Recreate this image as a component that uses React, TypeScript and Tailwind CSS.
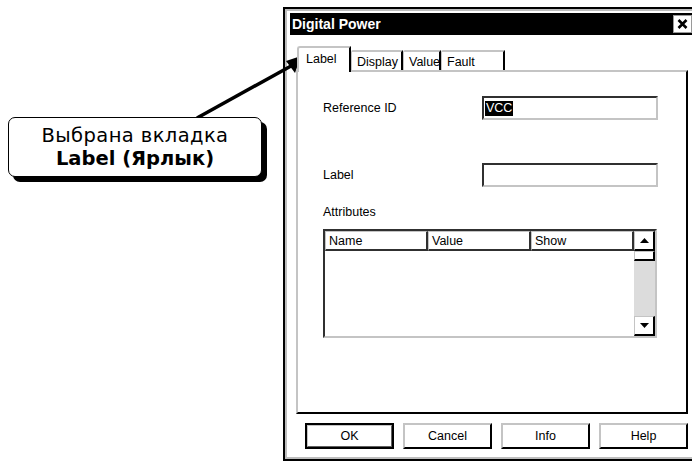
const Tri = ({ up }: { up: boolean }) => (
    <svg width="9" height="5" viewBox="0 0 9 5">
        {up ? <polygon points="0,5 9,5 4.5,0" fill="#000" /> : <polygon points="0,0 9,0 4.5,5" fill="#000" />}
    </svg>
)

const tabs = [
    { name: "Display", w: "w-[52px]" },
    { name: "Value", w: "w-[38px]" },
    { name: "Fault", w: "w-[64px]" },
]

const App = () => {
    return (
        <div className="relative w-[692px] h-[462px] overflow-hidden bg-white pt-[7px] font-['Liberation_Sans',Arial,sans-serif] text-black">
            {/* dialog window */}
            <div className="ml-[283px] w-[418px] h-[454px] border-2 border-black">
                <div className="h-full border-2 border-[#bdbdbd] pt-[2px] px-[3px] flex flex-col">
                    <div className="h-[22px] bg-black flex items-center justify-between pl-[2px]">
                        <span className="text-white font-bold text-[14px] leading-none">Digital Power</span>
                        <div className="w-[19px] h-[18px] mr-[2px] bg-white border border-[#9a9a9a] flex items-center justify-center">
                            <svg width="11" height="10" viewBox="0 0 11 10">
                                <path d="M1.5 1 L9.5 9 M9.5 1 L1.5 9" stroke="#000" strokeWidth="2.6" />
                            </svg>
                        </div>
                    </div>

                    {/* tabs */}
                    <div className="mt-[11px] ml-[6px] flex items-end text-[12.5px] leading-none">
                        <div className="relative z-10 -mb-[2px] ml-[1px] w-[54px] h-[26px] bg-white border-l-2 border-t-2 border-r-2 border-l-[#c4c4c4] border-t-[#c4c4c4] border-r-black rounded-tl-[3px] pl-[7px] pt-[5px]">
                            Label
                        </div>
                        {tabs.map((t) => (
                            <div key={t.name} className={`${t.w} h-[20px] bg-white border-l border-t-2 border-r-2 border-l-[#c4c4c4] border-t-[#c4c4c4] border-r-black rounded-tl-[2px] pl-[5px] pt-[4px]`}>
                                {t.name}
                            </div>
                        ))}
                    </div>

                    {/* panel */}
                    <div className="mx-[6px] h-[344px] border-2 border-t-[#c4c4c4] border-l-[#c4c4c4] border-r-black border-b-black text-[12.5px] pl-[25px] pt-[24px]">
                        <div className="flex items-center h-[24px]">
                            <span className="w-[159px]">Reference ID</span>
                            <div className="w-[176px] h-[24px] border-2 border-t-[#303030] border-l-[#303030] border-r-[#c4c4c4] border-b-[#c4c4c4] flex items-center pl-[1px]">
                                <span className="bg-black text-white leading-[15px] px-[1px]">VCC</span>
                            </div>
                        </div>
                        <div className="flex items-center h-[24px] mt-[43px]">
                            <span className="w-[159px]">Label</span>
                            <div className="w-[176px] h-[24px] border-2 border-t-[#303030] border-l-[#303030] border-r-[#c4c4c4] border-b-[#c4c4c4]" />
                        </div>
                        <div className="mt-[18px] leading-[15px]">Attributes</div>

                        {/* attributes list */}
                        <div className="mt-[9px] w-[334px] h-[109px] border-2 border-t-[#303030] border-l-[#303030] border-r-[#c4c4c4] border-b-[#c4c4c4] flex">
                            <div className="flex-1">
                                <div className="flex h-[20px]">
                                    {["Name", "Value", "Show"].map((h) => (
                                        <div key={h} className="w-[103px] h-[20px] border-l border-t border-l-[#c4c4c4] border-t-[#c4c4c4] border-r-2 border-b-2 border-r-[#303030] border-b-[#303030] pl-[3px] leading-[18px]">
                                            {h}
                                        </div>
                                    ))}
                                </div>
                            </div>
                            <div className="w-[21px] flex flex-col">
                                <div className="h-[20px] border-l border-t border-l-[#c4c4c4] border-t-[#c4c4c4] border-r-2 border-b-2 border-r-black border-b-black flex items-center justify-center">
                                    <Tri up />
                                </div>
                                <div className="h-[10px] border-l border-t border-l-[#c4c4c4] border-t-[#c4c4c4] border-r-2 border-b-2 border-r-black border-b-black bg-white" />
                                <div className="flex-1 bg-[#dcdcdc]" />
                                <div className="h-[20px] border-l border-t border-l-[#c4c4c4] border-t-[#c4c4c4] border-r-2 border-b-2 border-r-black border-b-black flex items-center justify-center">
                                    <Tri up={false} />
                                </div>
                            </div>
                        </div>
                    </div>

                    {/* buttons */}
                    <div className="mt-[9px] ml-[15px] flex gap-[9px] text-[12.5px]">
                        <div className="w-[89px] h-[26px] border-2 border-black flex">
                            <div className="flex-1 border-r border-b border-r-[#606060] border-b-[#606060] border-l border-t border-l-[#c4c4c4] border-t-[#c4c4c4] flex items-center justify-center">OK</div>
                        </div>
                        {["Cancel", "Info", "Help"].map((b) => (
                            <div key={b} className="w-[89px] h-[26px] border-2 border-l-[#c4c4c4] border-t-[#c4c4c4] border-r-black border-b-black flex items-center justify-center">
                                {b}
                            </div>
                        ))}
                    </div>
                </div>
            </div>

            {/* callout arrow */}
            <svg className="absolute left-0 top-0 pointer-events-none" width="692" height="462" viewBox="0 0 692 462">
                <line x1="197" y1="118" x2="291" y2="66" stroke="#000" strokeWidth="3.5" />
                <polygon points="301,56 286,61 295,73" fill="#000" />
            </svg>

            {/* callout box */}
            <div className="absolute left-[8px] top-[117px] w-[254px] h-[60px] rounded-[7px] border-[1.5px] border-black bg-white shadow-[5px_5px_0_0_#000] flex flex-col items-center justify-center text-[19.5px] leading-[23px] font-['DejaVu_Sans',sans-serif]">
                <span className="tracking-[0.4px]">Выбрана вкладка</span>
                <span className="font-bold">
                    <span className="font-black">Label</span> (Ярлык)
                </span>
            </div>
        </div>
    )
}

export default App
